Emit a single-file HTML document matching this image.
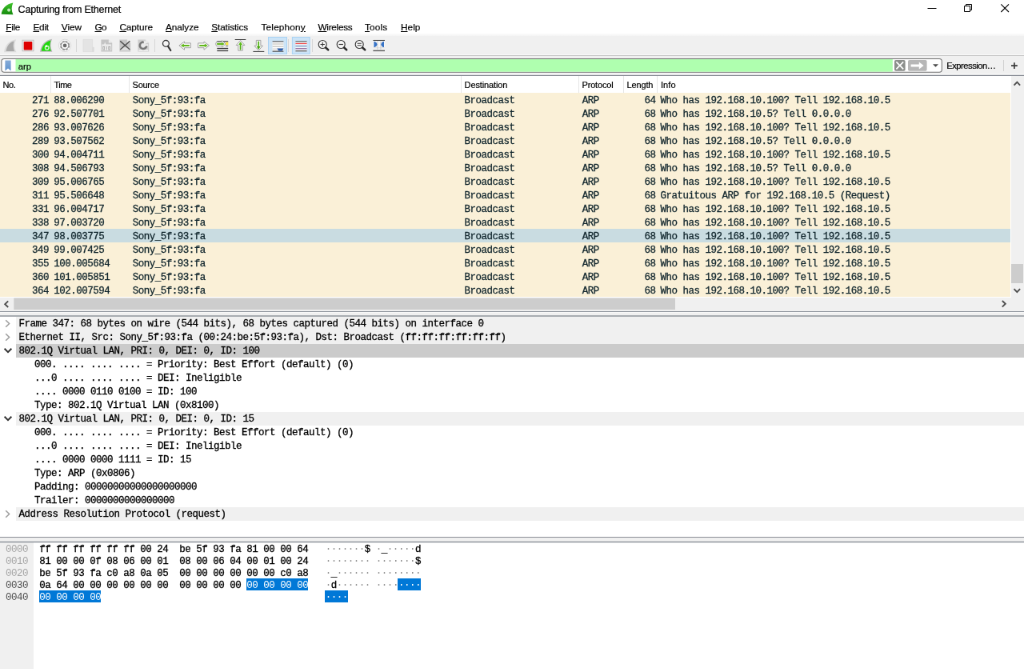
<!DOCTYPE html>
<html><head><meta charset="utf-8"><title>Capturing from Ethernet</title>
<style>
html,body{margin:0;padding:0;background:#fff;overflow:hidden;}
body{width:1024px;height:669px;position:relative;}
#app{position:absolute;left:0;top:0;width:1280px;height:837px;transform:scale(0.8);transform-origin:0 0;will-change:transform;background:#fff;overflow:hidden;font-family:"Liberation Sans", sans-serif;}
.abs{position:absolute;}
.t{position:absolute;white-space:pre;line-height:20px;font-family:"Liberation Sans", sans-serif;-webkit-text-stroke:0.2px;}
.t u{text-decoration:underline;text-underline-offset:1px;text-decoration-thickness:1px;}
.box{position:absolute;}
.row{position:absolute;left:0;width:1262.6px;height:17px;color:#12272e;font-family:"Liberation Mono", monospace;font-size:12.5px;letter-spacing:-0.5px;line-height:20.1px;white-space:pre;-webkit-text-stroke:0.3px #12272e;}
.row.sel{background:#c9dce1;}
.c{position:absolute;top:0;}
.c.r{text-align:right;}
.dbg{position:absolute;left:20px;right:0;height:17px;}
.d{position:absolute;font-family:"Liberation Mono", monospace;font-size:12.5px;letter-spacing:-0.5px;line-height:19.4px;white-space:pre;color:#000;-webkit-text-stroke:0.3px #000;}
.h{position:absolute;font-family:"Liberation Mono", monospace;font-size:12.5px;letter-spacing:-0.5px;line-height:15px;white-space:pre;color:#000;-webkit-text-stroke:0.3px;}
.h.off{color:#a6a6a6;-webkit-text-stroke:0;}
.h.off.on{color:#505050;}
.h i{font-style:normal;}
.h i.ds{color:#fff;-webkit-text-stroke:0;}
.h i.dt{color:#8c8c8c;-webkit-text-stroke:0;}
.vsep{position:absolute;width:1px;background:#e5e5e5;top:95px;height:21px;}
</style></head>
<body>
<div id="app">
<!-- toolbar + filter background -->
<div class="box" style="left:0;top:42px;width:1280px;height:53px;background:#f0f0f0"></div>
<div class="box" style="left:0;top:42px;width:1280px;height:3px;background:linear-gradient(#fcfcfc,#f4f4f4)"></div>
<div class="box" style="left:0;top:69px;width:1280px;height:1px;background:#c4c4c4"></div>
<div class="box" style="left:0;top:68px;width:1280px;height:1px;background:#fafafa"></div>
<!-- filter box (svg in overlay) -->
<!-- line under filter row -->
<div class="box" style="left:0;top:92px;width:1280px;height:2px;background:#f7f7f7"></div>
<!-- header -->
<div class="box" style="left:0;top:95px;width:1264px;height:277px;background:#fff"></div>
<div class="vsep" style="left:63px"></div>
<div class="vsep" style="left:161px"></div>
<div class="vsep" style="left:576px"></div>
<div class="vsep" style="left:723px"></div>
<div class="vsep" style="left:779px"></div>
<div class="vsep" style="left:821px"></div>
<!-- rows -->
<div class="box" style="left:0;top:116px;width:1262.6px;height:255px;background:#faf0d7"></div>
<div class="row" style="top:116px"><span class="c r" style="left:0;width:61px">271</span><span class="c" style="left:67.3px">88.006290</span><span class="c" style="left:165.7px">Sony_5f:93:fa</span><span class="c" style="left:580.4px">Broadcast</span><span class="c" style="left:727.8px">ARP</span><span class="c r" style="left:760px;width:59.4px">64</span><span class="c" style="left:825.6px">Who has 192.168.10.100? Tell 192.168.10.5</span></div>
<div class="row" style="top:133px"><span class="c r" style="left:0;width:61px">276</span><span class="c" style="left:67.3px">92.507701</span><span class="c" style="left:165.7px">Sony_5f:93:fa</span><span class="c" style="left:580.4px">Broadcast</span><span class="c" style="left:727.8px">ARP</span><span class="c r" style="left:760px;width:59.4px">68</span><span class="c" style="left:825.6px">Who has 192.168.10.5? Tell 0.0.0.0</span></div>
<div class="row" style="top:150px"><span class="c r" style="left:0;width:61px">286</span><span class="c" style="left:67.3px">93.007626</span><span class="c" style="left:165.7px">Sony_5f:93:fa</span><span class="c" style="left:580.4px">Broadcast</span><span class="c" style="left:727.8px">ARP</span><span class="c r" style="left:760px;width:59.4px">68</span><span class="c" style="left:825.6px">Who has 192.168.10.100? Tell 192.168.10.5</span></div>
<div class="row" style="top:167px"><span class="c r" style="left:0;width:61px">289</span><span class="c" style="left:67.3px">93.507562</span><span class="c" style="left:165.7px">Sony_5f:93:fa</span><span class="c" style="left:580.4px">Broadcast</span><span class="c" style="left:727.8px">ARP</span><span class="c r" style="left:760px;width:59.4px">68</span><span class="c" style="left:825.6px">Who has 192.168.10.5? Tell 0.0.0.0</span></div>
<div class="row" style="top:184px"><span class="c r" style="left:0;width:61px">300</span><span class="c" style="left:67.3px">94.004711</span><span class="c" style="left:165.7px">Sony_5f:93:fa</span><span class="c" style="left:580.4px">Broadcast</span><span class="c" style="left:727.8px">ARP</span><span class="c r" style="left:760px;width:59.4px">68</span><span class="c" style="left:825.6px">Who has 192.168.10.100? Tell 192.168.10.5</span></div>
<div class="row" style="top:201px"><span class="c r" style="left:0;width:61px">308</span><span class="c" style="left:67.3px">94.506793</span><span class="c" style="left:165.7px">Sony_5f:93:fa</span><span class="c" style="left:580.4px">Broadcast</span><span class="c" style="left:727.8px">ARP</span><span class="c r" style="left:760px;width:59.4px">68</span><span class="c" style="left:825.6px">Who has 192.168.10.5? Tell 0.0.0.0</span></div>
<div class="row" style="top:218px"><span class="c r" style="left:0;width:61px">309</span><span class="c" style="left:67.3px">95.006765</span><span class="c" style="left:165.7px">Sony_5f:93:fa</span><span class="c" style="left:580.4px">Broadcast</span><span class="c" style="left:727.8px">ARP</span><span class="c r" style="left:760px;width:59.4px">68</span><span class="c" style="left:825.6px">Who has 192.168.10.100? Tell 192.168.10.5</span></div>
<div class="row" style="top:235px"><span class="c r" style="left:0;width:61px">311</span><span class="c" style="left:67.3px">95.506648</span><span class="c" style="left:165.7px">Sony_5f:93:fa</span><span class="c" style="left:580.4px">Broadcast</span><span class="c" style="left:727.8px">ARP</span><span class="c r" style="left:760px;width:59.4px">68</span><span class="c" style="left:825.6px">Gratuitous ARP for 192.168.10.5 (Request)</span></div>
<div class="row" style="top:252px"><span class="c r" style="left:0;width:61px">331</span><span class="c" style="left:67.3px">96.004717</span><span class="c" style="left:165.7px">Sony_5f:93:fa</span><span class="c" style="left:580.4px">Broadcast</span><span class="c" style="left:727.8px">ARP</span><span class="c r" style="left:760px;width:59.4px">68</span><span class="c" style="left:825.6px">Who has 192.168.10.100? Tell 192.168.10.5</span></div>
<div class="row" style="top:269px"><span class="c r" style="left:0;width:61px">338</span><span class="c" style="left:67.3px">97.003720</span><span class="c" style="left:165.7px">Sony_5f:93:fa</span><span class="c" style="left:580.4px">Broadcast</span><span class="c" style="left:727.8px">ARP</span><span class="c r" style="left:760px;width:59.4px">68</span><span class="c" style="left:825.6px">Who has 192.168.10.100? Tell 192.168.10.5</span></div>
<div class="row sel" style="top:286px"><span class="c r" style="left:0;width:61px">347</span><span class="c" style="left:67.3px">98.003775</span><span class="c" style="left:165.7px">Sony_5f:93:fa</span><span class="c" style="left:580.4px">Broadcast</span><span class="c" style="left:727.8px">ARP</span><span class="c r" style="left:760px;width:59.4px">68</span><span class="c" style="left:825.6px">Who has 192.168.10.100? Tell 192.168.10.5</span></div>
<div class="row" style="top:303px"><span class="c r" style="left:0;width:61px">349</span><span class="c" style="left:67.3px">99.007425</span><span class="c" style="left:165.7px">Sony_5f:93:fa</span><span class="c" style="left:580.4px">Broadcast</span><span class="c" style="left:727.8px">ARP</span><span class="c r" style="left:760px;width:59.4px">68</span><span class="c" style="left:825.6px">Who has 192.168.10.100? Tell 192.168.10.5</span></div>
<div class="row" style="top:320px"><span class="c r" style="left:0;width:61px">355</span><span class="c" style="left:67.3px">100.005684</span><span class="c" style="left:165.7px">Sony_5f:93:fa</span><span class="c" style="left:580.4px">Broadcast</span><span class="c" style="left:727.8px">ARP</span><span class="c r" style="left:760px;width:59.4px">68</span><span class="c" style="left:825.6px">Who has 192.168.10.100? Tell 192.168.10.5</span></div>
<div class="row" style="top:337px"><span class="c r" style="left:0;width:61px">360</span><span class="c" style="left:67.3px">101.005851</span><span class="c" style="left:165.7px">Sony_5f:93:fa</span><span class="c" style="left:580.4px">Broadcast</span><span class="c" style="left:727.8px">ARP</span><span class="c r" style="left:760px;width:59.4px">68</span><span class="c" style="left:825.6px">Who has 192.168.10.100? Tell 192.168.10.5</span></div>
<div class="row" style="top:354px"><span class="c r" style="left:0;width:61px">364</span><span class="c" style="left:67.3px">102.007594</span><span class="c" style="left:165.7px">Sony_5f:93:fa</span><span class="c" style="left:580.4px">Broadcast</span><span class="c" style="left:727.8px">ARP</span><span class="c r" style="left:760px;width:59.4px">68</span><span class="c" style="left:825.6px">Who has 192.168.10.100? Tell 192.168.10.5</span></div>
<!-- v scrollbar -->
<div class="box" style="left:1264px;top:95px;width:16px;height:277px;background:#f0f0f0"></div>
<div class="box" style="left:1264px;top:330px;width:15px;height:24px;background:#cdcdcd"></div>
<!-- h scrollbar -->
<div class="box" style="left:0;top:372px;width:1280px;height:17px;background:#f0f0f0"></div>
<svg class="abs" style="left:0;top:95px" width="1280" height="300" viewBox="0 95 1280 300">
<g fill="none" stroke="#4f4f4f" stroke-width="1.9">
<path d="M1267.5 106.6 L1271.3 102.6 L1275.1 106.6"/>
<path d="M1267.5 361.2 L1271.3 365.2 L1275.1 361.2"/>
<path d="M10.2 376.4 L6.2 380.2 L10.2 384"/>
<path d="M1252.8 376 L1256.8 379.8 L1252.8 383.6"/>
</g></svg>
<!-- splitter 1 -->
<div class="box" style="left:0;top:389px;width:1280px;height:7px;background:#f0f0f0"></div>
<!-- details -->
<div class="box" style="left:0;top:396px;width:1280px;height:275px;background:#fff"></div>
<div class="dbg" style="top:396px;background:#f0f0f0"></div>
<svg class="abs" style="left:5.3px;top:398.7px" width="9" height="11" viewBox="0 0 9 11"><path d="M2.2 1.2 L6.6 5.5 L2.2 9.8" fill="none" stroke="#9c9c9c" stroke-width="1.5"/></svg>
<div class="d" style="top:396px;left:23.5px">Frame 347: 68 bytes on wire (544 bits), 68 bytes captured (544 bits) on interface 0</div>
<div class="dbg" style="top:413px;background:#f0f0f0"></div>
<svg class="abs" style="left:5.3px;top:415.7px" width="9" height="11" viewBox="0 0 9 11"><path d="M2.2 1.2 L6.6 5.5 L2.2 9.8" fill="none" stroke="#9c9c9c" stroke-width="1.5"/></svg>
<div class="d" style="top:413px;left:23.5px">Ethernet II, Src: Sony_5f:93:fa (00:24:be:5f:93:fa), Dst: Broadcast (ff:ff:ff:ff:ff:ff)</div>
<div class="dbg" style="top:430px;background:#cbcbcb"></div>
<svg class="abs" style="left:3.7px;top:433.6px" width="12" height="9" viewBox="0 0 12 9"><path d="M1.6 1.8 L6 6.2 L10.4 1.8" fill="none" stroke="#333" stroke-width="1.95"/></svg>
<div class="d" style="top:430px;left:23.5px">802.1Q Virtual LAN, PRI: 0, DEI: 0, ID: 100</div>
<div class="d" style="top:447px;left:42.9px">000. .... .... .... = Priority: Best Effort (default) (0)</div>
<div class="d" style="top:464px;left:42.9px">...0 .... .... .... = DEI: Ineligible</div>
<div class="d" style="top:481px;left:42.9px">.... 0000 0110 0100 = ID: 100</div>
<div class="d" style="top:498px;left:42.9px">Type: 802.1Q Virtual LAN (0x8100)</div>
<div class="dbg" style="top:515px;background:#f0f0f0"></div>
<svg class="abs" style="left:3.7px;top:518.6px" width="12" height="9" viewBox="0 0 12 9"><path d="M1.6 1.8 L6 6.2 L10.4 1.8" fill="none" stroke="#333" stroke-width="1.95"/></svg>
<div class="d" style="top:515px;left:23.5px">802.1Q Virtual LAN, PRI: 0, DEI: 0, ID: 15</div>
<div class="d" style="top:532px;left:42.9px">000. .... .... .... = Priority: Best Effort (default) (0)</div>
<div class="d" style="top:549px;left:42.9px">...0 .... .... .... = DEI: Ineligible</div>
<div class="d" style="top:566px;left:42.9px">.... 0000 0000 1111 = ID: 15</div>
<div class="d" style="top:583px;left:42.9px">Type: ARP (0x0806)</div>
<div class="d" style="top:600px;left:42.9px">Padding: 00000000000000000000</div>
<div class="d" style="top:617px;left:42.9px">Trailer: 0000000000000000</div>
<div class="dbg" style="top:634px;background:#f0f0f0"></div>
<svg class="abs" style="left:5.3px;top:636.7px" width="9" height="11" viewBox="0 0 9 11"><path d="M2.2 1.2 L6.6 5.5 L2.2 9.8" fill="none" stroke="#9c9c9c" stroke-width="1.5"/></svg>
<div class="d" style="top:634px;left:23.5px">Address Resolution Protocol (request)</div>
<!-- splitter 2 -->
<div class="box" style="left:0;top:671px;width:1280px;height:7px;background:#f0f0f0"></div>
<!-- hex pane -->
<div class="box" style="left:0;top:678px;width:1280px;height:160px;background:#fff"></div>
<div class="box" style="left:0;top:678px;width:42px;height:160px;background:#f0f0f0"></div>
<div class="h off" style="top:680.1px;left:7px">0000</div>
<div class="h" style="top:680.1px;left:49.2px">ff ff ff ff ff ff 00 24  be 5f 93 fa 81 00 00 64</div>
<div class="h asc" style="top:680.1px;left:406.7px"><i class="dt">·</i><i class="dt">·</i><i class="dt">·</i><i class="dt">·</i><i class="dt">·</i><i class="dt">·</i><i class="dt">·</i>$ <i class="dt">·</i>_<i class="dt">·</i><i class="dt">·</i><i class="dt">·</i><i class="dt">·</i><i class="dt">·</i>d</div>
<div class="h off" style="top:695.1px;left:7px">0010</div>
<div class="h" style="top:695.1px;left:49.2px">81 00 00 0f 08 06 00 01  08 00 06 04 00 01 00 24</div>
<div class="h asc" style="top:695.1px;left:406.7px"><i class="dt">·</i><i class="dt">·</i><i class="dt">·</i><i class="dt">·</i><i class="dt">·</i><i class="dt">·</i><i class="dt">·</i><i class="dt">·</i> <i class="dt">·</i><i class="dt">·</i><i class="dt">·</i><i class="dt">·</i><i class="dt">·</i><i class="dt">·</i><i class="dt">·</i>$</div>
<div class="h off" style="top:710.1px;left:7px">0020</div>
<div class="h" style="top:710.1px;left:49.2px">be 5f 93 fa c0 a8 0a 05  00 00 00 00 00 00 c0 a8</div>
<div class="h asc" style="top:710.1px;left:406.7px"><i class="dt">·</i>_<i class="dt">·</i><i class="dt">·</i><i class="dt">·</i><i class="dt">·</i><i class="dt">·</i><i class="dt">·</i> <i class="dt">·</i><i class="dt">·</i><i class="dt">·</i><i class="dt">·</i><i class="dt">·</i><i class="dt">·</i><i class="dt">·</i><i class="dt">·</i></div>
<div class="box" style="left:307.9px;top:723.1px;width:77.5px;height:15px;background:#0078d7"></div>
<div class="box" style="left:497.4px;top:723.1px;width:28.5px;height:15px;background:#0078d7"></div>
<div class="h off on" style="top:725.1px;left:7px">0030</div>
<div class="h" style="top:725.1px;left:49.2px">0a 64 00 00 00 00 00 00  00 00 00 00 <i class="ds">00 00 00 00</i></div>
<div class="h asc" style="top:725.1px;left:406.7px"><i class="dt">·</i>d<i class="dt">·</i><i class="dt">·</i><i class="dt">·</i><i class="dt">·</i><i class="dt">·</i><i class="dt">·</i> <i class="dt">·</i><i class="dt">·</i><i class="dt">·</i><i class="dt">·</i><i class="ds">·</i><i class="ds">·</i><i class="ds">·</i><i class="ds">·</i></div>
<div class="box" style="left:48.9px;top:738.1px;width:77.5px;height:15px;background:#0078d7"></div>
<div class="box" style="left:406.4px;top:738.1px;width:28.5px;height:15px;background:#0078d7"></div>
<div class="h off on" style="top:740.1px;left:7px">0040</div>
<div class="h" style="top:740.1px;left:49.2px"><i class="ds">00 00 00 00</i></div>
<div class="h asc" style="top:740.1px;left:406.7px"><i class="ds">·</i><i class="ds">·</i><i class="ds">·</i><i class="ds">·</i></div>
<svg class="abs" style="left:0;top:0" width="1280" height="837" viewBox="0 0 1280 837">
<rect x="1.9" y="73.5" width="1175.4" height="16.7" rx="3.2" fill="#fff" stroke="#6f6f6f" stroke-width="1.05"/>
<rect x="19.5" y="74.05" width="1096.3" height="15.6" fill="#afffaf"/>
<path d="M1264 82.1 H1271.8 M1267.9 78.2 V86" stroke="#383838" stroke-width="1.7" fill="none"/>
<rect x="17.3" y="372.5" width="826.7" height="14.6" fill="#cdcdcd"/>
<rect x="0" y="93.8" width="1280" height="1.2" fill="#828790"/>
<rect x="0" y="389" width="1280" height="1" fill="#8f949c"/>
<rect x="0" y="390" width="1280" height="1" fill="#f8f8f8"/>
<rect x="0" y="394.35" width="1280" height="1.3" fill="#828790"/>
<rect x="0" y="671.15" width="1280" height="1.2" fill="#7c8189"/>
<rect x="0" y="672.3" width="1280" height="1" fill="#f8f8f8"/>
<rect x="0" y="676.85" width="1280" height="1.3" fill="#828790"/>
</svg>
<svg class="abs" style="left:0;top:0" width="1280" height="100" viewBox="0 0 1280 100">
<defs>
<linearGradient id="gfin" x1="0" y1="0" x2="0" y2="1"><stop offset="0" stop-color="#3fc42b"/><stop offset="1" stop-color="#168a0e"/></linearGradient>
<linearGradient id="gbm" x1="0" y1="0" x2="0" y2="1"><stop offset="0" stop-color="#86abd8"/><stop offset="1" stop-color="#5f93cf"/></linearGradient>
</defs>
<!-- app icon -->
<g transform="translate(1.5,3.6) scale(0.92)">
<path d="M0.2 15.4 C1 7.5 7 1.2 16.2 -0.2 C13.6 5 13.8 10.5 16.2 15.8 Z" fill="url(#gfin)"/>
<circle cx="10.4" cy="9.8" r="2.2" fill="#bfe8b8"/>
</g>
<!-- window controls -->
<path d="M1159.5 10.5 H1170.5" stroke="#000" stroke-width="1"/>
<path d="M1205.5 7.5 H1212.5 V14.5 H1205.5 Z M1207.5 7.5 V5.5 H1214.5 V12.5 H1212.5" fill="none" stroke="#000" stroke-width="1"/>
<path d="M1251.3 5.3 L1261 15 M1261 5.3 L1251.3 15" stroke="#000" stroke-width="1.1"/>

<!-- toolbar separators -->
<g stroke="#d6d6d6" stroke-width="1">
<path d="M95.5 49 V65"/><path d="M193.5 49 V65"/><path d="M360.5 49 V65"/><path d="M390.5 49 V65"/>
</g>
<!-- checked button backgrounds -->
<rect x="335.5" y="46.5" width="23" height="21" fill="#cce4f7" stroke="#a8d2f3"/>
<rect x="365.4" y="46.5" width="21.8" height="21" fill="#cce4f7" stroke="#a8d2f3"/>

<!-- 1 start (disabled fin) -->
<g transform="translate(5,48.4)">
<path d="M0.1 16.8 C0.9 8.5 6.5 2 15.1 0.8 C12.7 6 12.9 11.5 15.4 16.8 Z" fill="#dcdcdc"/>
<path d="M2.6 15.6 C3.4 9.4 7.2 4.4 12.6 3.2 C11.2 7.4 11.4 11.5 13 15.6 Z" fill="#a8a8a8"/>
</g>
<!-- 2 stop -->
<g transform="translate(27,49)">
<rect x="1" y="1.2" width="14" height="13.6" fill="#e9e9e9" stroke="#bdbdbd" stroke-width="0.9"/>
<rect x="2.7" y="2.9" width="10.6" height="10.6" rx="0.8" fill="#de0000"/>
</g>
<!-- 3 restart (green fin) -->
<g transform="translate(50,48)">
<path d="M0.1 16.8 C0.9 8.5 6.5 2 15.1 0.8 C12.7 6 12.9 11.5 15.4 16.8 Z" fill="#b8b8b8"/>
<path d="M1.8 15.8 C2.6 9 7.2 3.6 13.5 2.4 C11.7 7 11.9 11.5 13.9 15.8 Z" fill="#1fd80c"/>
<circle cx="8.7" cy="11.8" r="2.3" fill="none" stroke="#d8f8d0" stroke-width="1.3"/>
<rect x="6.8" y="8.5" width="2.2" height="2.2" fill="#fff"/>
</g>
<!-- 4 options (gear) -->
<g transform="translate(73,49)">
<circle cx="8.1" cy="7.9" r="7.7" fill="#f7f7f7" stroke="#d4d4d4" stroke-width="0.8"/>
<circle cx="8.1" cy="7.9" r="4.6" fill="#fbfbfb" stroke="#9a9a9a" stroke-width="0.9"/>
<circle cx="8.1" cy="7.9" r="5.3" fill="none" stroke="#8a8a8a" stroke-width="1.5" stroke-dasharray="2.9 1.26"/>
<circle cx="8.1" cy="7.9" r="2.4" fill="#6a6a6a"/>
</g>
<!-- 5 open (disabled) -->
<g transform="translate(102,49)">
<path d="M2 0.4 H13.6 V10.2 H15.2 V15.6 H2 Z" fill="#e4e4e4" stroke="#dcdcdc" stroke-width="0.8"/>
<rect x="13.2" y="10.2" width="2" height="5.4" fill="#dadada"/>
</g>
<!-- 6 save (disabled) -->
<g transform="translate(125,49)">
<path d="M1.4 0.4 H10.8 L15.2 4.6 V15.6 H1.4 Z" fill="#c4c4c4"/>
<path d="M10.8 0.4 V4.6 H15.2 Z" fill="#ececec"/>
<path d="M2.4 6.4 H5.2 L6.2 3.4 L7.2 6.4 H14.2 V8 H2.4 Z" fill="#efefef"/>
<rect x="2.4" y="8.4" width="11.8" height="5.6" fill="#f2f2f2"/>
<g fill="none" stroke="#a4a4a4" stroke-width="0.9"><rect x="3.8" y="9.6" width="1.9" height="3.4"/><path d="M8.4 9.2 V13.4"/><rect x="10.8" y="9.6" width="1.9" height="3.4"/></g>
</g>
<!-- 7 close -->
<g transform="translate(148,49)">
<path d="M1.4 0.4 H10.8 L15.2 4.6 V15.6 H1.4 Z" fill="#c6c6c6"/>
<path d="M10.8 0.4 V4.6 H15.2 Z" fill="#ececec"/>
<rect x="2.4" y="10.4" width="11.8" height="3.8" fill="#dedede"/>
<path d="M2.2 2.4 L14.4 13 M14.4 2.4 L2.2 13" stroke="#545454" stroke-width="1.45"/>
</g>
<!-- 8 reload -->
<g transform="translate(171,49)">
<path d="M1.4 0.4 H10.8 L15.2 4.6 V15.6 H1.4 Z" fill="#cdcdcd"/>
<path d="M10.8 0.4 V4.6 H15.2 Z" fill="#ececec"/>
<rect x="2.4" y="13" width="11.8" height="2" fill="#ececec"/>
<circle cx="8" cy="7.8" r="2.4" fill="#e9e9e9"/>
<path d="M12.3 7.8 A4.3 4.3 0 1 1 9.6 3.8" fill="none" stroke="#767676" stroke-width="2.4"/>
<path d="M8.6 1.4 L13 4.2 L9 7 Z" fill="#ececec"/>
<rect x="10" y="6.4" width="4" height="2" fill="#f0f0f0"/>
</g>
<!-- 9 find -->
<g transform="translate(200,49)" fill="none" stroke="#363636">
<circle cx="7.4" cy="5.4" r="3.9" stroke-width="1.3" fill="#f4f4f4"/>
<path d="M9.9 8.6 L13.3 14" stroke-width="2.2" stroke-linecap="round"/>
<path d="M5 4.6 A2.8 2.8 0 0 1 7.6 2.8" stroke="#fff" stroke-width="1"/>
</g>
<!-- 10 back -->
<g transform="translate(223,49)">
<path d="M0.9 7.9 L7.5 3 V4.9 H15.4 V10.7 H7.5 V13.2 Z" fill="#fafafa" stroke="#a2a2a2" stroke-width="1" stroke-linejoin="round"/>
<path d="M5 7.9 H13" stroke="#63b81c" stroke-width="2" stroke-linecap="round"/>
<path d="M3 7.9 L6.8 5.5 V10.3 Z" fill="#63b81c"/>
</g>
<!-- 11 forward -->
<g transform="translate(246,49)">
<path d="M15.5 7.9 L9 3 V4.9 H1.6 V10.7 H9 V13.2 Z" fill="#fafafa" stroke="#a2a2a2" stroke-width="1" stroke-linejoin="round"/>
<path d="M4 7.9 H11.6" stroke="#63b81c" stroke-width="2" stroke-linecap="round"/>
<path d="M13.6 7.9 L9.8 5.5 V10.3 Z" fill="#63b81c"/>
</g>
<!-- 12 go to packet -->
<g transform="translate(269,49)">
<path d="M2.3 2.8 H16.2" stroke="#3c3c3c" stroke-width="1.2"/>
<path d="M2.3 11.5 H16.2" stroke="#333" stroke-width="1.3"/>
<path d="M2.3 14.4 H16.2" stroke="#4a4a4a" stroke-width="1.5"/>
<rect x="13" y="3.8" width="3.4" height="3.4" fill="#f7e840"/>
<path d="M13 8.4 H16.2" stroke="#8c8c8c" stroke-width="1.4"/>
<path d="M12.9 5.9 L8.6 1.6 V3.3 H1.6 Q-0.4 5.9 1.6 8.5 H8.6 V10.2 Z" fill="#fafafa" stroke="#a2a2a2" stroke-width="1" stroke-linejoin="round"/>
<path d="M3 5.9 H9.4" stroke="#63b81c" stroke-width="2.1" stroke-linecap="round"/>
<path d="M11.6 5.9 L8.4 3.7 V8.1 Z" fill="#63b81c"/>
</g>
<!-- 13 first -->
<g transform="translate(292,49)">
<path d="M1.7 0.5 H15.3" stroke="#3c3c3c" stroke-width="1"/>
<path d="M8.6 1.5 L13.9 7.5 H11.3 V14.2 H5.8 V7.5 H3.2 Z" fill="#fafafa" stroke="#a2a2a2" stroke-width="1" stroke-linejoin="round"/>
<path d="M8.6 5 V12.6" stroke="#4fae14" stroke-width="1.8" stroke-linecap="round"/>
<path d="M8.6 3.2 L6.2 7 H11 Z" fill="#5fba1c"/>
</g>
<!-- 14 last -->
<g transform="translate(315,49)">
<path d="M1.4 15.4 H15.3" stroke="#3c3c3c" stroke-width="1"/>
<path d="M8.2 14 L13.5 8.2 H10.9 V1.4 H5.3 V8.2 H2.9 Z" fill="#fafafa" stroke="#a2a2a2" stroke-width="1" stroke-linejoin="round"/>
<path d="M8.2 3.4 V10.8" stroke="#55b418" stroke-width="1.8" stroke-linecap="round"/>
<path d="M8.2 12.7 L5.8 8.9 H10.6 Z" fill="#45a410"/>
</g>
<!-- 15 autoscroll -->
<g transform="translate(339,49)">
<rect x="1.6" y="3" width="13.8" height="12" fill="#fff"/>
<path d="M1.6 2.9 H15.4" stroke="#555" stroke-width="1.2"/>
<path d="M1.6 6 H15.4 M1.6 9.2 H15.4" stroke="#d0d0cc" stroke-width="1.7"/>
<path d="M1.6 12.2 H15.4" stroke="#d4d4d4" stroke-width="1.4"/>
<path d="M1.6 15.1 H15.4" stroke="#444" stroke-width="1.2"/>
<path d="M7.4 11.4 H15.4 L13.8 14.6 H9.2 Z" fill="#2a5caa"/>
</g>
<!-- 16 colorize -->
<g transform="translate(368,49)">
<rect x="1.4" y="2.6" width="14.2" height="12.6" fill="#f6f9fc" stroke="none"/>
<path d="M1.4 2.9 H15.6" stroke="#5a5a5a" stroke-width="1.2"/>
<path d="M1.4 5.5 H15.6" stroke="#f04a4a" stroke-width="1.2"/>
<path d="M1.4 8.6 H15.6" stroke="#8aa8cc" stroke-width="1.8"/>
<path d="M1.4 11.8 H15.6" stroke="#7a4b8a" stroke-width="1.1"/>
<path d="M1.4 14.7 H15.6" stroke="#6a6a6a" stroke-width="1.4"/>
</g>
<!-- 17 zoom in -->
<g transform="translate(396,49)" fill="none" stroke="#363636">
<circle cx="7.2" cy="6.5" r="5" stroke-width="1.15" fill="#f7f7f7"/>
<path d="M11.1 10.5 L14.2 13.3" stroke-width="2.5" stroke-linecap="round" stroke="#2c2c2c"/>
<path d="M4.5 6.5 H9.9 M7.2 3.8 V9.2" stroke-width="1.1"/>
</g>
<!-- 18 zoom out -->
<g transform="translate(419,49)" fill="none" stroke="#363636">
<circle cx="7.2" cy="6.5" r="5" stroke-width="1.15" fill="#f7f7f7"/>
<path d="M11.1 10.5 L14.2 13.3" stroke-width="2.5" stroke-linecap="round" stroke="#2c2c2c"/>
<path d="M4.5 6.5 H9.9" stroke-width="1.2"/>
</g>
<!-- 19 zoom reset -->
<g transform="translate(442,49)" fill="none" stroke="#363636">
<circle cx="7.2" cy="6.5" r="5" stroke-width="1.15" fill="#f7f7f7"/>
<path d="M11.1 10.5 L14.2 13.3" stroke-width="2.5" stroke-linecap="round" stroke="#2c2c2c"/>
<path d="M4.6 5.3 H9.8 M4.6 7.7 H9.8" stroke-width="1.1"/>
</g>
<!-- 20 resize columns -->
<g transform="translate(465,49)">
<rect x="1.4" y="1.6" width="14.6" height="12.6" fill="#f8f8f8"/>
<path d="M1.4 1.5 H16" stroke="#444" stroke-width="1.1"/>
<path d="M1.4 14.5 H16" stroke="#555" stroke-width="1.2"/>
<path d="M1.4 13.3 H16" stroke="#b8b8b8" stroke-width="0.8"/>
<path d="M1.6 10.8 H15.8" stroke="#d6d6d6" stroke-width="0.9"/>
<path d="M6.9 2.4 V13.6 M10.9 2.4 V13.6" stroke="#cfcfcf" stroke-width="1.1"/>
<path d="M2.4 3 V9.9 H3.6 Q6.4 8.6 6.5 6.45 Q6.4 4.3 3.6 3 Z" fill="#3873c6"/>
<path d="M15 3 V9.9 H13.8 Q11.4 8.6 11.3 6.45 Q11.4 4.3 13.8 3 Z" fill="#3873c6"/>
</g>

<!-- filter bookmark -->
<path d="M6.4 75.6 H13.6 V88.4 L10 85.6 L6.4 88.4 Z" fill="url(#gbm)"/>
<!-- filter clear / apply / dropdown -->
<rect x="1118" y="75" width="13.6" height="13.8" rx="1.8" fill="#8c8f8c"/>
<path d="M1120.4 77.4 L1129.2 86.4 M1129.2 77.4 L1120.4 86.4" stroke="#fff" stroke-width="1.6"/>
<rect x="1135" y="75" width="23.6" height="13.8" rx="1.8" fill="#b7b7b7"/>
<path d="M1138.6 80.4 H1148.8 V77.6 L1154.6 82 L1148.8 86.4 V83.6 H1138.6 Z" fill="#fff"/>
<path d="M1166 80.2 H1173 L1169.5 83.8 Z" fill="#4a4a4a"/>
<path d="M1254.5 75 V89" stroke="#d0d0d0" stroke-width="1"/>
</svg>

<div class="t" style="left:22.62px;top:1.62px;font-size:12.6px;letter-spacing:-0.262px;color:#000;font-weight:400;">Capturing from Ethernet</div>
<div class="t" style="left:7.25px;top:23.62px;font-size:11.8px;letter-spacing:-0.316px;color:#000;font-weight:400;"><u>F</u>ile</div>
<div class="t" style="left:41.38px;top:23.62px;font-size:11.8px;letter-spacing:-0.191px;color:#000;font-weight:400;"><u>E</u>dit</div>
<div class="t" style="left:76.75px;top:23.62px;font-size:11.8px;letter-spacing:-0.027px;color:#000;font-weight:400;"><u>V</u>iew</div>
<div class="t" style="left:118.50px;top:23.62px;font-size:11.8px;letter-spacing:-0.719px;color:#000;font-weight:400;"><u>G</u>o</div>
<div class="t" style="left:149.38px;top:23.62px;font-size:11.8px;letter-spacing:-0.051px;color:#000;font-weight:400;"><u>C</u>apture</div>
<div class="t" style="left:207.00px;top:23.62px;font-size:11.8px;letter-spacing:-0.078px;color:#000;font-weight:400;"><u>A</u>nalyze</div>
<div class="t" style="left:264.25px;top:23.62px;font-size:11.8px;letter-spacing:-0.133px;color:#000;font-weight:400;"><u>S</u>tatistics</div>
<div class="t" style="left:326.56px;top:23.62px;font-size:11.8px;letter-spacing:0.168px;color:#000;font-weight:400;">Telephon<u>y</u></div>
<div class="t" style="left:397.50px;top:23.62px;font-size:11.8px;letter-spacing:-0.295px;color:#000;font-weight:400;"><u>W</u>ireless</div>
<div class="t" style="left:456.00px;top:23.62px;font-size:11.8px;letter-spacing:0.166px;color:#000;font-weight:400;"><u>T</u>ools</div>
<div class="t" style="left:501.00px;top:23.62px;font-size:11.8px;letter-spacing:0.027px;color:#000;font-weight:400;"><u>H</u>elp</div>
<div class="t" style="left:22.75px;top:72.75px;font-size:11.2px;letter-spacing:0.026px;color:#000;font-weight:400;">arp</div>
<div class="t" style="left:1183.25px;top:72.00px;font-size:11.2px;letter-spacing:-0.480px;color:#000;font-weight:400;">Expression…</div>
<div class="t" style="left:3.38px;top:95.50px;font-size:11px;letter-spacing:-0.333px;color:#000;font-weight:400;">No.</div>
<div class="t" style="left:67.38px;top:95.50px;font-size:11px;letter-spacing:-0.480px;color:#000;font-weight:400;">Time</div>
<div class="t" style="left:165.62px;top:95.50px;font-size:11px;letter-spacing:-0.289px;color:#000;font-weight:400;">Source</div>
<div class="t" style="left:580.62px;top:95.50px;font-size:11px;letter-spacing:-0.129px;color:#000;font-weight:400;">Destination</div>
<div class="t" style="left:727.50px;top:95.50px;font-size:11px;letter-spacing:-0.170px;color:#000;font-weight:400;">Protocol</div>
<div class="t" style="left:783.62px;top:95.50px;font-size:11px;letter-spacing:-0.172px;color:#000;font-weight:400;">Length</div>
<div class="t" style="left:825.88px;top:95.50px;font-size:11px;letter-spacing:0.160px;color:#000;font-weight:400;">Info</div>
</div>
</body></html>
